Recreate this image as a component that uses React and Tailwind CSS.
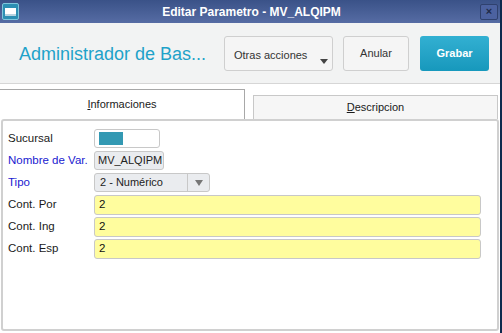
import React from "react";

const F = { fontFamily: '"Liberation Sans", Arial, sans-serif' };

function Label({ children, blue }) {
  return (
    <div className={`w-[86px] text-[11.5px] leading-none ${blue ? "text-[#2020d0]" : "text-[#1a1a1a]"}`}>{children}</div>
  );
}

export default function App() {
  return (
    <div style={F} className="w-[502px] h-[333px] bg-white flex overflow-hidden">
      <div className="flex-1 flex flex-col min-w-0">
        {/* Title bar */}
        <div className="h-[23px] bg-gradient-to-b from-[#3a5288] to-[#566ca4] flex items-center px-[2px] relative">
          <div className="w-[17px] h-[17px] rounded-[2px] bg-[#2c8fb3] border border-[#7fc6dc] flex items-center justify-center">
            <div className="w-[11px] h-[8px] bg-white border-b-[2px] border-[#b8d4e0]" />
          </div>
          <div className="flex-1 text-center text-white font-bold text-[12px] pl-[4px]">Editar Parametro - MV_ALQIPM</div>
          <div className="w-[18px] h-[16px] border border-[#2f416e] rounded-[2px] bg-[#4c62a0] flex items-center justify-center text-[#1e2a48] text-[11px] font-bold leading-none">×</div>
        </div>
        {/* Header */}
        <div className="h-[61px] bg-[#f2f3f3] border-b border-[#d6d6d6] flex items-center pl-[19px] pr-[11px]">
          <div className="flex-1 text-[18px] text-[#1ea2c9] pt-[3px]">Administrador de Bas...</div>
          <div className="relative w-[109px] h-[35px] border border-[#cfcfcf] rounded-[3px] bg-[#f5f5f5] text-[11px] text-[#333] pl-[9px] pt-[13px] leading-none">
            Otras acciones
            <div className="absolute right-[4px] bottom-[6px] w-0 h-0 border-l-[4px] border-r-[4px] border-t-[5px] border-l-transparent border-r-transparent border-t-[#444]" />
          </div>
          <div className="ml-[10px] w-[66px] h-[35px] border border-[#cfcfcf] rounded-[3px] bg-[#f5f5f5] text-[11px] text-[#333] flex items-center justify-center">Anular</div>
          <div className="ml-[11px] w-[69px] h-[35px] rounded-[3px] bg-gradient-to-b from-[#32b0d2] to-[#1698bc] text-white font-bold text-[11px] flex items-center justify-center">Grabar</div>
        </div>
        {/* Tabs */}
        <div className="mt-[5px] flex items-end h-[30px]">
          <div className="w-[245px] h-[30px] border-t border-r border-[#a8a8a8] bg-white flex items-center justify-center text-[11px] text-[#1a1a1a]">
            <span><span className="underline">I</span>nformaciones</span>
          </div>
          <div className="ml-[8px] w-[245px] h-[24px] border border-[#c8c8c8] border-b-0 bg-[#f6f6f6] flex items-center justify-center text-[11px] text-[#1a1a1a]">
            <span><span className="underline">D</span>escripcion</span>
          </div>
        </div>
        {/* Panel */}
        <div className="flex-1 mb-[2px] mx-[1px] border-2 border-[#d0d0d0] rounded-[3px] pt-[8px] pl-[5px] pr-[16px] flex flex-col gap-[3px]">
          <div className="flex items-center h-[19px]">
            <Label>Sucursal</Label>
            <div className="w-[66px] h-[19px] border border-[#c8c8c8] rounded-[3px] bg-white px-[4px] py-[2px]">
              <div className="w-[24px] h-full bg-[#3399b3]" />
            </div>
          </div>
          <div className="flex items-center h-[19px]">
            <Label blue>Nombre de Var.</Label>
            <div className="w-[70px] h-[19px] border border-[#c8c8c8] rounded-[3px] bg-[#eaecef] text-[11px] text-[#222] pl-[3px] flex items-center">MV_ALQIPM</div>
          </div>
          <div className="flex items-center h-[19px]">
            <Label blue>Tipo</Label>
            <div className="w-[116px] h-[19px] border border-[#c8c8c8] rounded-[3px] bg-[#eaecef] flex items-stretch text-[11px] text-[#222]">
              <div className="flex-1 pl-[5px] flex items-center">2 - Numérico</div>
              <div className="w-[22px] border-l border-[#c8c8c8] flex items-center justify-center">
                <div className="w-0 h-0 border-l-[4px] border-r-[4px] border-t-[6px] border-l-transparent border-r-transparent border-t-[#777]" />
              </div>
            </div>
          </div>
          {["Cont. Por", "Cont. Ing", "Cont. Esp"].map((l) => (
            <div key={l} className="flex items-center h-[19px]">
              <Label>{l}</Label>
              <div className="flex-1 h-[20px] border border-[#c8c8c8] rounded-[3px] bg-[#fffd9e] text-[11.5px] text-[#111] pl-[4px] flex items-center">2</div>
            </div>
          ))}
        </div>
      </div>
      <div className="w-[2px] bg-[#0d2a4e]" />
    </div>
  );
}
